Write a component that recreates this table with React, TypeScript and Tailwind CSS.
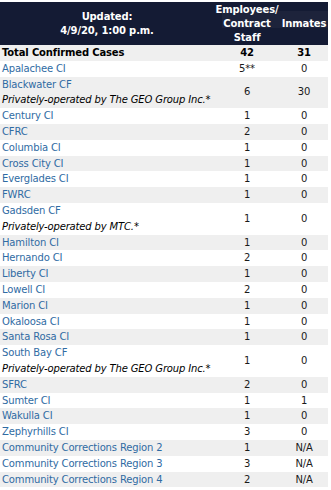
type Row = {
  name: string;
  note?: string;
  staff: string;
  inmates: string;
};

const rows: Row[] = [
  { name: "Apalachee CI", staff: "5**", inmates: "0" },
  { name: "Blackwater CF", note: "Privately-operated by The GEO Group Inc.*", staff: "6", inmates: "30" },
  { name: "Century CI", staff: "1", inmates: "0" },
  { name: "CFRC", staff: "2", inmates: "0" },
  { name: "Columbia CI", staff: "1", inmates: "0" },
  { name: "Cross City CI", staff: "1", inmates: "0" },
  { name: "Everglades CI", staff: "1", inmates: "0" },
  { name: "FWRC", staff: "1", inmates: "0" },
  { name: "Gadsden CF", note: "Privately-operated by MTC.*", staff: "1", inmates: "0" },
  { name: "Hamilton CI", staff: "1", inmates: "0" },
  { name: "Hernando CI", staff: "2", inmates: "0" },
  { name: "Liberty CI", staff: "1", inmates: "0" },
  { name: "Lowell CI", staff: "2", inmates: "0" },
  { name: "Marion CI", staff: "1", inmates: "0" },
  { name: "Okaloosa CI", staff: "1", inmates: "0" },
  { name: "Santa Rosa CI", staff: "1", inmates: "0" },
  { name: "South Bay CF", note: "Privately-operated by The GEO Group Inc.*", staff: "1", inmates: "0" },
  { name: "SFRC", staff: "2", inmates: "0" },
  { name: "Sumter CI", staff: "1", inmates: "1" },
  { name: "Wakulla CI", staff: "1", inmates: "0" },
  { name: "Zephyrhills CI", staff: "3", inmates: "0" },
  { name: "Community Corrections Region 2", staff: "1", inmates: "N/A" },
  { name: "Community Corrections Region 3", staff: "3", inmates: "N/A" },
  { name: "Community Corrections Region 4", staff: "2", inmates: "N/A" },
];

export default function App() {
  return (
    <div className="relative min-h-[490px] bg-white pt-[2px] text-[10px] tracking-[-0.15px] text-[#1a1a1a] font-['DejaVu_Sans',Verdana,sans-serif]">
      <table className="w-[328px] border-collapse table-fixed">
        <colgroup>
          <col className="w-[214px]" />
          <col className="w-[66px]" />
          <col className="w-[48px]" />
        </colgroup>
        <thead className="bg-[#141b34] text-white font-bold leading-[14px]">
          <tr className="h-[43px]">
            <th className="text-center align-middle pt-[1px]">
              Updated:
              <br />
              4/9/20, 1:00 p.m.
            </th>
            <th className="text-center align-middle">
              Employees/
              <br />
              Contract
              <br />
              Staff
            </th>
            <th className="text-center align-middle">Inmates</th>
          </tr>
        </thead>
        <tbody className="leading-[15.8px]">
          <tr className="bg-[#efefef] font-bold text-black">
            <td className="pl-[2px]">Total Confirmed Cases</td>
            <td className="text-center">42</td>
            <td className="text-center">31</td>
          </tr>
          {rows.map((row, i) => (
            <tr key={row.name} className={i % 2 === 0 ? "bg-white" : "bg-[#efefef]"}>
              <td className="pl-[2px] whitespace-nowrap">
                <span className="text-[#2f6ba3]">{row.name}</span>
                {row.note && (
                  <>
                    <br />
                    <span className="italic text-black">{row.note}</span>
                  </>
                )}
              </td>
              <td className="text-center align-middle">{row.staff}</td>
              <td className="text-center align-middle">{row.inmates}</td>
            </tr>
          ))}
        </tbody>
      </table>
      {/* faint snipping-tool box left over in the screenshot */}
      <div className="absolute left-[222px] top-[11px] w-[106px] h-[17px] bg-white/[0.04] pointer-events-none" />
    </div>
  );
}
